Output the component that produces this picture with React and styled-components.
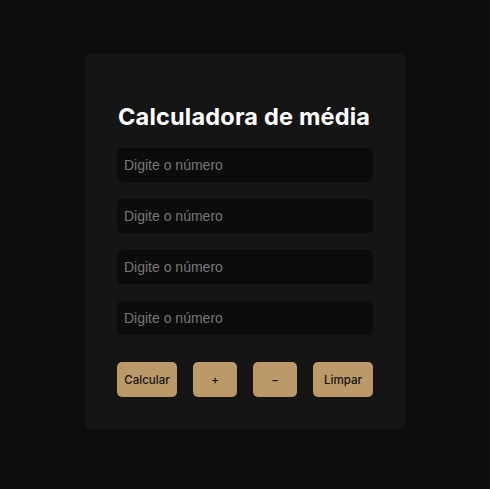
import React from 'react';
import styled, { createGlobalStyle } from "styled-components";

const GlobalStyle = createGlobalStyle`
  html, body {
    margin: 0;
    padding: 0;
    background: #0d0d0d;
  }
  * { box-sizing: border-box; }
`;

const Page = styled.div`
  width: 490px;
  height: 489px;
  display: flex;
  justify-content: center;
  padding-top: 53px;
`;

const Card = styled.div`
  width: 320px;
  height: 376px;
  background: #151515;
  border-radius: 5px;
  padding: 50px 32px 33px;
  display: flex;
  flex-direction: column;
`;

const Title = styled.h1`
  margin: 0 0 17px 1px;
  font-family: "Inter", "Lato", sans-serif;
  font-weight: 700;
  font-size: 23.5px;
  line-height: 28px;
  color: #ffffff;
  letter-spacing: 0.2px;
  white-space: nowrap;
`;

const Fields = styled.div`
  display: flex;
  flex-direction: column;
  gap: 17px;
`;

const Input = styled.input`
  height: 34px;
  width: 256px;
  border: none;
  outline: none;
  border-radius: 5px;
  background: #0c0c0c;
  padding: 0 7px;
  font-family: "Liberation Sans", Arial, sans-serif;
  font-size: 14px;
  color: #ddd;
  &::placeholder {
    color: #777777;
  }
`;

const Buttons = styled.div`
  display: flex;
  gap: 16px;
  margin-top: 27px;
`;

const Button = styled.button`
  width: ${p => (p.$wide ? "60px" : "44px")};
  height: 35px;
  border: none;
  border-radius: 5px;
  background: #bc9968;
  color: #111;
  font-family: "Inter", "Lato", sans-serif;
  font-weight: 500;
  font-size: 11.5px;
  padding: 0;
  cursor: pointer;
`;

const App = () => {
  return (
    <Page>
      <GlobalStyle />
      <Card>
        <Title>Calculadora de média</Title>
        <Fields>
          <Input placeholder="Digite o número" />
          <Input placeholder="Digite o número" />
          <Input placeholder="Digite o número" />
          <Input placeholder="Digite o número" />
        </Fields>
        <Buttons>
          <Button $wide>Calcular</Button>
          <Button>+</Button>
          <Button>−</Button>
          <Button $wide>Limpar</Button>
        </Buttons>
      </Card>
    </Page>
  );
};

export default App;
